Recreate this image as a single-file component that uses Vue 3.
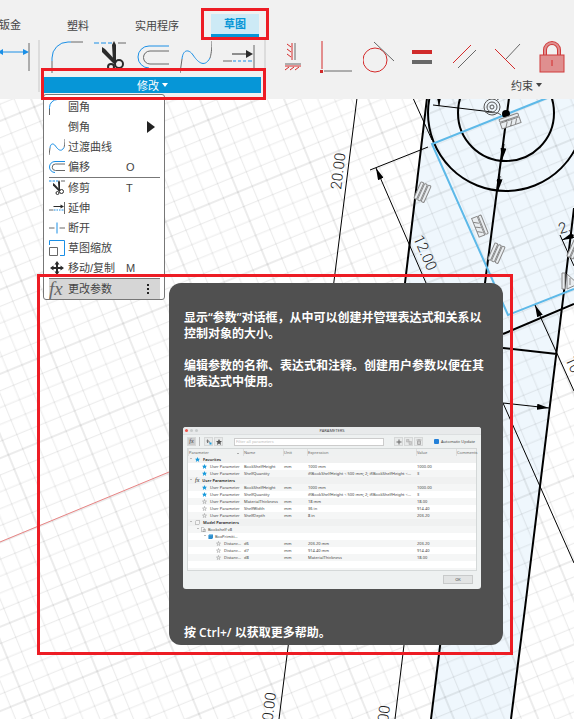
<script setup>
const tabs = [
  { id: 'sheet', label: '钣金' },
  { id: 'plastic', label: '塑料' },
  { id: 'utility', label: '实用程序' },
  { id: 'sketch', label: '草图', active: true },
]
const modifyTools = [
  { icon: 'fillet', label: '圆角' },
  { icon: 'trim', label: '修剪' },
  { icon: 'offset', label: '偏移' },
  { icon: 'spline', label: '过渡曲线' },
  { icon: 'extend', label: '延伸' },
]
const constraintTools = [
  { icon: 'horizontal', label: '水平/竖直' },
  { icon: 'coincident', label: '重合' },
  { icon: 'tangent', label: '相切' },
  { icon: 'equal', label: '相等' },
  { icon: 'parallel', label: '平行' },
  { icon: 'perpendicular', label: '垂直' },
  { icon: 'lock', label: '固定' },
]
const menuGroups = [
  [
    { icon: 'fillet', label: '圆角' },
    { label: '倒角', submenu: true },
    { icon: 'spline', label: '过渡曲线' },
    { icon: 'offset', label: '偏移', key: 'O' },
  ],
  [
    { icon: 'trim', label: '修剪', key: 'T' },
    { icon: 'extend', label: '延伸' },
    { icon: 'break', label: '断开' },
    { icon: 'scale', label: '草图缩放' },
    { icon: 'move', label: '移动/复制', key: 'M' },
  ],
  [{ fx: true, label: '更改参数', active: true }],
]
const dimensionLines = [
  'M426 283L376 168',
  'M574 391L535 305',
  'M503 403L549 408',
  'M439 96V106',
  'M574 235L562 240',
  'M504 144L502 160',
  'M500 176L498 191',
]
const longExpr = 'if(BookShelfHeight < 500 mm; 2; if(BookShelfHeight <...'
const rows = [
  { group: true, icon: 'star', label: 'Favorites' },
  { icon: 'star', label: 'User Parameter', name: 'BookShelfHeight', unit: 'mm', expr: '1000 mm', value: '1000.00' },
  { icon: 'star', label: 'User Parameter', name: 'ShelfQuantity', unit: '', expr: longExpr, value: '3' },
  { group: true, icon: 'fx', label: 'User Parameters' },
  { icon: 'star', label: 'User Parameter', name: 'BookShelfHeight', unit: 'mm', expr: '1000 mm', value: '1000.00' },
  { icon: 'star', label: 'User Parameter', name: 'ShelfQuantity', unit: '', expr: longExpr, value: '3' },
  { icon: 'starline', label: 'User Parameter', name: 'MaterialThickness', unit: 'mm', expr: '18 mm', value: '18.00' },
  { icon: 'starline', label: 'User Parameter', name: 'ShelfWidth', unit: 'mm', expr: '36 in', value: '914.40' },
  { icon: 'starline', label: 'User Parameter', name: 'ShelfDepth', unit: 'mm', expr: '8 in', value: '203.20' },
  { group: true, icon: 'cube', label: 'Model Parameters' },
  { open: true, level: 1, icon: 'page', label: 'Bookshelf v8' },
  { open: true, level: 2, icon: 'box', label: 'BoxPrimiti...' },
  { level: 3, icon: 'starline', label: 'Distanc...', name: 'd6', unit: 'mm', expr: '203.20 mm', value: '203.20' },
  { level: 3, icon: 'starline', label: 'Distanc...', name: 'd7', unit: 'mm', expr: '914.40 mm', value: '914.40' },
  { level: 3, icon: 'starline', label: 'Distanc...', name: 'd8', unit: 'mm', expr: 'MaterialThickness', value: '18.00' },
]
</script>

<template>
  <div class="app">
    <svg class="symbols" aria-hidden="true">
      <symbol id="fillet" viewBox="0 0 32 32">
        <path class="blue" d="M1 20V17A16 16 0 0 1 17 1H20" />
        <path class="gray" d="M20 1H32M1 20V32" />
      </symbol>
      <symbol id="trim" viewBox="0 0 32 32">
        <path class="blue" d="M0 2H5M7 2H12M14 2H18" />
        <path class="gray" d="M24 2H32" />
        <path class="dark" d="M18 4L20 0L22 4V20L19 20Z" />
        <path class="dark" d="M8 6L11 8L23 21L20 23L8 11Z" />
        <circle class="ring" cx="17" cy="26" r="3" />
        <circle class="ring" cx="25" cy="23" r="4" />
      </symbol>
      <symbol id="offset" viewBox="0 0 32 32">
        <path class="blue" d="M32 5H12A11 11 0 0 0 12 27" />
        <path class="gray" d="M32 10H13A6 6 0 0 0 13 23H32" />
      </symbol>
      <symbol id="spline" viewBox="0 0 32 32">
        <path class="gray" d="M0 32L2 18M32 0C32 8 31 14 30 17" />
        <path class="blue" d="M2 18C3 8 9 8 13 14S24 28 30 17" />
      </symbol>
      <symbol id="extend" viewBox="0 0 32 32">
        <path class="gray" d="M0 20H9M31 4V28" />
        <path class="blue" d="M10 20H13M15 20H18M20 20H23M25 20H29" />
        <path class="ink" d="M9 13H25" />
        <path class="dark" d="M23 9L30 13L23 17Z" />
      </symbol>
      <symbol id="break" viewBox="0 0 32 32">
        <path class="gray" d="M0 16H11M21 16H32" />
        <path class="blue" d="M16 5V27" />
      </symbol>
      <symbol id="scale" viewBox="0 0 32 32">
        <path class="blue" d="M1 10V1H31V31H22" />
        <path class="gray" d="M1 15H17V31H1Z" />
      </symbol>
      <symbol id="move" viewBox="0 0 32 32">
        <path class="heavy" d="M16 6V26M6 16H26" />
        <path class="dark" d="M16 2L21 9H11ZM16 30L21 23H11ZM2 16L9 11V21ZM30 16L23 11V21Z" />
      </symbol>
      <symbol id="dimension" viewBox="0 0 32 32">
        <path class="gray" d="M31 2V30" />
        <path class="blue" d="M0 11H29" />
        <path class="bluefill" d="M25 8L31 11L25 14ZM5 8L0 11L5 14Z" />
      </symbol>
      <symbol id="horizontal" viewBox="0 0 32 32">
        <path class="gray" d="M18 2V19M8 23H24" />
        <path class="red" d="M15 2V19M10 3L14 6M10 8L14 11M10 13L14 16M8 25H24M8 29L12 26M13 29L17 26M18 29L22 26" />
      </symbol>
      <symbol id="coincident" viewBox="0 0 32 32">
        <path class="red" d="M2 0V28" />
        <path class="gray" d="M4 30H32" />
        <rect class="redfill" x="0" y="29" width="3" height="3" />
      </symbol>
      <symbol id="tangent" viewBox="0 0 32 32">
        <circle class="red" cx="12" cy="19" r="12" />
        <path class="gray" d="M11 1L31 20" />
      </symbol>
      <symbol id="equal" viewBox="0 0 32 32">
        <rect class="redfill" x="6" y="9" width="20" height="4" />
        <rect class="grayfill" x="6" y="19" width="20" height="4" />
      </symbol>
      <symbol id="parallel" viewBox="0 0 32 32">
        <path class="gray" d="M9 27L27 9" />
        <path class="red" d="M4 22L22 4" />
      </symbol>
      <symbol id="perpendicular" viewBox="0 0 32 32">
        <path class="red" d="M3 8L23 28" />
        <path class="gray" d="M14 18L28 3" />
      </symbol>
      <symbol id="lock" viewBox="0 0 32 32">
        <path class="shackleout" d="M10 14V9A6 6 0 0 1 24 9V14" />
        <path class="shackle" d="M10 14V9A6 6 0 0 1 24 9V14" />
        <rect class="lockbody" x="5" y="14" width="24" height="17" />
        <path class="red" d="M17 19V25" />
      </symbol>
      <symbol id="star" viewBox="0 0 12 12">
        <path fill="#199bdc" d="M6 0L8 4L12 4L9 7L10 12L6 9L2 12L3 7L0 4L4 4Z" />
      </symbol>
      <symbol id="starline" viewBox="0 0 12 12">
        <path fill="none" stroke="#888" d="M6 1L7 5L11 5L8 7L9 11L6 9L3 11L4 7L1 5L5 5Z" />
      </symbol>
      <symbol id="darkstar" viewBox="0 0 12 12">
        <path fill="#555" d="M6 0L8 4L12 4L9 7L10 12L6 9L2 12L3 7L0 4L4 4Z" />
      </symbol>
      <symbol id="cube" viewBox="0 0 12 12">
        <path fill="#f4f4f4" stroke="#777" d="M1 3L3 1H11V9L9 11H1Z" />
      </symbol>
      <symbol id="page" viewBox="0 0 12 12">
        <path fill="#fff" stroke="#777" d="M1 1H6L8 4V11H1ZM5 6H11V11H5Z" />
      </symbol>
      <symbol id="box" viewBox="0 0 12 12">
        <path fill="#2f8fcd" d="M1 3L3 1H12V9L10 12H1Z" />
        <path fill="#7fc1ec" d="M1 3L3 1H12L10 3Z" />
      </symbol>
    </svg>

    <svg class="canvas" aria-label="草图画布">
      <defs>
        <pattern id="grid" width="78" height="78" patternUnits="userSpaceOnUse" patternTransform="translate(38 527) rotate(-22.3)">
          <path d="M15.6 0V78M31.2 0V78M46.8 0V78M62.4 0V78M0 15.6H78M0 31.2H78M0 46.8H78M0 62.4H78" fill="none" stroke="#000" stroke-opacity="0.08" />
          <path d="M0 0V78M78 0V78M0 0H78M0 78H78" fill="none" stroke="#000" stroke-opacity="0.15" />
        </pattern>
        <marker id="arrow" viewBox="0 0 12 6" refX="12" refY="3" markerWidth="12" markerHeight="6" markerUnits="userSpaceOnUse" orient="auto">
          <path d="M0 0L12 3L0 6Z" />
        </marker>
        <g id="bars" class="glyph">
          <rect x="-9" y="-5" width="18" height="3" rx="1" />
          <rect x="-9" y="-1" width="18" height="3" rx="1" />
          <rect x="-9" y="3" width="18" height="3" rx="1" />
        </g>
        <g id="hatch" class="glyph">
          <rect x="-10" y="-5" width="20" height="3" rx="1" />
          <path d="M-10 -1H10V5H-10ZM-6 5L-3 0M-1 5L2 0M4 5L7 0" />
        </g>
      </defs>
      <path class="profile" d="M427 98H574V304L562 309L511 719H431L438 645H404V283Z" />
      <rect width="100%" height="100%" fill="url(#grid)" />
      <path d="M0 542L169 472" stroke="#e88484" stroke-width="1" fill="none" />
      <g class="thin">
        <path d="M357 98L279 719M404 645L395 719M413 98L432 140M370 170L428 147" />
        <path d="M433 105L492 112M503 403L574 563M560 235L574 266" />
      </g>
      <g class="thick">
        <circle cx="506" cy="113" r="48" />
        <circle cx="506" cy="113" r="78" />
        <path d="M427 98L405 283M509 98L485 283L431 719M574 208L565 283L526 600L511 719M503 334L574 304M503 348L557 354" />
      </g>
      <path class="edge" d="M547 98L432 144L508 315L574 289" />
      <g class="thin">
        <path v-for="d in dimensionLines" :key="d" :d="d" marker-end="url(#arrow)" />
      </g>
      <circle cx="506" cy="114" r="4" />
      <use href="#bars" transform="translate(422 192) rotate(-66)" />
      <use href="#hatch" transform="translate(510 121) rotate(-19)" />
      <use href="#hatch" transform="translate(480 226) rotate(68)" />
      <use href="#bars" transform="translate(496 253) rotate(-66)" />
      <use href="#bars" transform="translate(575 250) rotate(-66)" />
      <path class="glyph" d="M562 273H565V289H562ZM567 274V289L578 284ZM570 278V285" />
      <g class="glyph strong">
        <circle cx="492" cy="107" r="8" />
        <circle cx="492" cy="107" r="5" />
        <circle cx="492" cy="107" r="2" />
        <path d="M485 112L498 113M497 100L500 98M498 113L501 115" />
      </g>
      <g class="dims">
        <text transform="translate(341 190) rotate(-83)">20.00</text>
        <text transform="translate(413 238) rotate(66)">12.00</text>
        <text transform="translate(560 234) rotate(-15)">2.</text>
        <text transform="translate(565 359) rotate(66)">10</text>
        <text text-anchor="end" transform="translate(276 693) rotate(-83)">0.00</text>
        <text text-anchor="end" transform="translate(390 706) rotate(-83)">00</text>
      </g>
    </svg>

    <header class="ribbon">
      <nav class="tabs">
        <button v-for="t in tabs" :key="t.id" type="button" class="tab" :class="[t.id, { active: t.active }]">{{ t.label }}</button>
      </nav>
      <div class="groups">
        <div class="group lead">
          <button type="button" class="tool" aria-label="尺寸"><svg class="icon"><use href="#dimension" /></svg></button>
        </div>
        <div class="group modify">
          <div class="tools">
            <button v-for="t in modifyTools" :key="t.icon" type="button" class="tool" :aria-label="t.label">
              <svg class="icon"><use :href="'#' + t.icon" /></svg>
            </button>
          </div>
          <button type="button" class="caption selected">修改<i class="caret"></i></button>
        </div>
        <div class="group constraints">
          <div class="tools">
            <button v-for="t in constraintTools" :key="t.icon" type="button" class="tool" :aria-label="t.label">
              <svg class="icon"><use :href="'#' + t.icon" /></svg>
            </button>
          </div>
          <button type="button" class="caption">约束<i class="caret"></i></button>
        </div>
      </div>
    </header>

    <div class="menu">
      <ul v-for="(g, i) in menuGroups" :key="i">
        <li v-for="m in g" :key="m.label">
          <button type="button" class="item" :class="{ active: m.active }">
            <span v-if="m.fx" class="fx">fx</span>
            <svg v-else class="micon"><use v-if="m.icon" :href="'#' + m.icon" /></svg>
            <span class="name">{{ m.label }}</span>
            <span v-if="m.key" class="key">{{ m.key }}</span>
            <i v-if="m.submenu" class="sub"></i>
            <span v-if="m.active" class="dots"><i></i><i></i><i></i></span>
          </button>
        </li>
      </ul>
    </div>

    <aside class="tip">
      <p>显示“参数”对话框，从中可以创建并管理表达式和关系以<br />控制对象的大小。</p>
      <p>编辑参数的名称、表达式和注释。创建用户参数以便在其<br />他表达式中使用。</p>
      <section class="dialog">
        <div class="titlebar">
          <span class="lights"><i></i><i></i><i></i></span>PARAMETERS
        </div>
        <div class="bar">
          <button type="button" class="sq on"><em>fx</em></button>
          <span class="vr"></span>
          <button type="button" class="sq" aria-label="Units"><svg viewBox="0 0 12 12"><path d="M3 1V8M1 4H6M5 6H8" stroke="#777" stroke-width="2" fill="none" /><rect x="7" y="7" width="4" height="4" fill="#199bdc" /></svg></button>
          <button type="button" class="sq" aria-label="Favorites"><svg><use href="#darkstar" /></svg></button>
          <input class="filter" type="text" placeholder="Filter all parameters" aria-label="Filter all parameters" />
          <button type="button" class="sq add" aria-label="Add"><svg viewBox="0 0 12 12"><path d="M6 1V11M1 6H11" stroke="#666" stroke-width="2" /></svg></button>
          <button type="button" class="sq" aria-label="Copy"><svg viewBox="0 0 12 12"><path d="M1 1H6V6H1ZM6 5H11V11H6Z" fill="#ccc" stroke="#aaa" /></svg></button>
          <button type="button" class="sq" aria-label="Delete"><svg viewBox="0 0 12 12"><path d="M1 2H11M3 4H9V11H3ZM5 1H7" fill="#ccc" stroke="#aaa" stroke-width="2" /></svg></button>
          <label class="auto"><input type="checkbox" checked />Automatic Update</label>
        </div>
        <div class="sheetbox">
          <table>
            <colgroup><col class="c1" /><col class="c2" /><col class="c3" /><col class="c4" /><col class="c5" /><col class="c6" /></colgroup>
            <thead>
              <tr><th>Parameter<i class="sort"></i></th><th>Name</th><th>Unit</th><th>Expression</th><th>Value</th><th>Comments</th></tr>
            </thead>
            <tbody>
              <tr v-for="(r, i) in rows" :key="i" :class="{ grouprow: r.group }">
                <td>
                  <span class="tree" :class="['l' + (r.level || 0), { leaf: !r.group && !r.open }]">
                    <i v-if="r.group || r.open" class="chev"></i>
                    <em v-if="r.icon === 'fx'">fx</em>
                    <svg v-else class="ticon"><use :href="'#' + r.icon" /></svg>
                    {{ r.label }}
                  </span>
                </td>
                <td>{{ r.name }}</td><td>{{ r.unit }}</td><td>{{ r.expr }}</td><td>{{ r.value }}</td><td></td>
              </tr>
            </tbody>
          </table>
        </div>
        <div class="foot"><button type="button" class="ok">OK</button></div>
      </section>
      <p class="help">按 Ctrl+/ 以获取更多帮助。</p>
    </aside>

    <div class="mark mark-tab"></div>
    <div class="mark mark-modify"></div>
    <div class="mark mark-tip"></div>
  </div>
</template>

<style>
body {
  background: #fff;
}
</style>

<style scoped>
.app {
  position: relative;
  min-height: 100vh;
  overflow: hidden;
  font-family: "Liberation Sans", "Noto Sans CJK SC", sans-serif;
  font-size: 11px;
  color: #444;
}
button {
  border: 0;
  margin: 0;
  padding: 0;
  background: none;
  font: inherit;
  color: inherit;
  white-space: nowrap;
}
p, ul { margin: 0; padding: 0; list-style: none; }
.symbols { position: absolute; width: 0; height: 0; }
.blue, .gray, .red, .ink, .heavy {
  fill: none;
  vector-effect: non-scaling-stroke;
}
.blue { stroke: #1a8fe6; }
.gray { stroke: #686868; }
.red { stroke: #d42a2a; }
.ink { stroke: #2b2b2b; }
.heavy { stroke: #2b2b2b; stroke-width: 2; }
.ring { fill: none; stroke: #2b2b2b; stroke-width: 2; }
.dark { fill: #2b2b2b; }
.bluefill { fill: #1a8fe6; }
.redfill { fill: #d02a2a; }
.grayfill { fill: #686868; }
.lockbody { fill: #df8f8f; stroke: #d03a3a; }
.shackleout { fill: none; stroke: #d03a3a; stroke-width: 4; }
.shackle { fill: none; stroke: #df8f8f; stroke-width: 2; }

.canvas { position: absolute; inset: 0; width: 100%; height: 100%; }
.profile { fill: #eff7fd; }
.thin { fill: none; stroke: #000; }
.thick { fill: none; stroke: #000; stroke-width: 2; }
.edge { fill: none; stroke: #5db9e8; stroke-width: 2; }
.glyph { fill: #e9edf0; stroke: #888; }
.strong { stroke: #555; fill: none; }
.dims { font-family: Roboto, sans-serif; font-weight: 300; font-size: 15px; fill: #222; }

.ribbon {
  position: relative;
  background: #f1f1f1;
  height: 99px;
  overflow: hidden;
}
.tabs { display: flex; padding-top: 14px; line-height: 22px; }
.tab { height: 23px; flex: none; }
.sheet { width: 21px; display: flex; justify-content: flex-end; }
.plastic { margin-left: 46px; }
.utility { margin-left: 46px; }
.tab.sketch {
  width: 48px;
  margin-left: 32px;
  background: #cdeaf6;
  border-bottom: 3px solid #0696d7;
  line-height: 20px;
  color: #0696d7;
  font-weight: 700;
}
.groups { display: flex; padding-top: 3px; }
.group { flex: none; height: 52px; }
.lead { width: 38px; border-right: 2px solid #dcdcdc; }
.lead .tool { margin-left: -2px; width: 32px; }
.modify { width: 217px; padding: 0 3px 0 4px; border-right: 2px solid #dcdcdc; }
.constraints { padding-left: 5px; }
.tools { display: flex; padding-left: 1px; }
.constraints .tools { padding: 0; }
.tool { display: flex; justify-content: center; width: 43px; padding-top: 1px; }
.icon { width: 32px; height: 32px; display: block; overflow: visible; }
.caption {
  display: flex;
  align-items: center;
  justify-content: center;
  gap: 3px;
  width: 100%;
  height: 16px;
  margin-top: 4px;
}
.caption.selected { background: #0696d7; color: #fff; }
.constraints .caption { width: auto; margin-left: 240px; }
.caret { border: 3px solid transparent; border-top: 4px solid currentColor; border-bottom: 0; }

.menu {
  position: absolute;
  left: 43px;
  top: 94px;
  width: 111px;
  padding: 2px 4px 0 5px;
  background: #fff;
  border: 1px solid #777;
  border-radius: 3px;
}
.menu ul + ul { border-top: 1px solid #777; }
.item {
  display: flex;
  align-items: center;
  width: 100%;
  height: 20px;
  line-height: 20px;
  text-align: left;
}
.item.active { background: #d6d6d6; }
.micon { width: 16px; height: 16px; margin-right: 3px; flex: none; overflow: visible; }
.fx {
  width: 19px;
  font-family: "Liberation Serif", serif;
  font-style: italic;
  font-size: 19px;
  color: #666;
}
.name { width: 58px; }
.sub { margin-left: 21px; border: 6px solid transparent; border-left: 8px solid #222; border-right: 0; }
.dots { margin-left: 21px; display: grid; gap: 2px; }
.dots i { width: 2px; height: 2px; background: #222; }

.tip {
  position: absolute;
  left: 169px;
  top: 283px;
  width: 334px;
  box-sizing: border-box;
  padding: 27px 15px 4px;
  border-radius: 12px;
  background: #505050;
  color: #fff;
  font-family: "Open Sans", "Noto Sans CJK SC", sans-serif;
  font-size: 12px;
  font-weight: 600;
  line-height: 16px;
  white-space: nowrap;
}
.tip p + p { margin-top: 16px; }

.dialog {
  width: 298px;
  margin: 37px 0 36px -1px;
  border-radius: 3px;
  background: #eef1f1;
  overflow: hidden;
  color: #444;
  font-family: "Noto Sans", sans-serif;
  font-size: 4px;
  font-weight: 400;
  line-height: 7px;
}
.titlebar { position: relative; text-align: center; background: #e8eaeb; border-bottom: 1px solid #dcdfe0; }
.lights { position: absolute; left: 2px; top: 2px; display: flex; gap: 2px; }
.lights i { width: 3px; height: 3px; border-radius: 50%; background: #c8cccc; }
.lights i:first-child { background: #f0564d; }
.bar { display: flex; align-items: center; height: 9px; padding: 2px 4px; }
.sq {
  width: 9px;
  height: 9px;
  box-sizing: border-box;
  flex: none;
  display: flex;
  align-items: center;
  justify-content: center;
  border: 1px solid #d6d8d8;
  background: #e8eaea;
  margin-right: 1px;
}
.sq svg { width: 6px; height: 6px; flex: none; }
.on { background: #ccc; }
em { font-family: "Liberation Serif", serif; font-style: italic; font-size: 6px; font-weight: 400; }
.vr { width: 1px; height: 9px; background: #bbb; margin: 0 4px 0 2px; }
.filter {
  flex: 1;
  min-width: 0;
  height: 8px;
  box-sizing: border-box;
  margin: 0 10px;
  padding: 0 1px;
  border: 1px solid #ccc;
  background: #fff;
  font: inherit;
}
.filter::placeholder { color: #bbb; }
.auto { display: flex; align-items: center; gap: 2px; margin-left: 10px; width: 43px; }
.auto input { appearance: none; width: 5px; height: 5px; margin: 0; border-radius: 1px; background: #2380d8; flex: none; }
.sheetbox {
  margin: 0 4px;
  height: 123px;
  border: 1px solid #d4d8d8;
  box-sizing: border-box;
  background: repeating-linear-gradient(#fff 0 7px, #f5f6f6 7px 14px);
}
table { width: 100%; table-layout: fixed; border-collapse: collapse; }
.c1 { width: 55px; }
.c2 { width: 40px; }
.c3 { width: 24px; }
.c4 { width: 109px; }
.c5 { width: 40px; }
th, td { height: 7px; padding: 0 0 0 1px; font-weight: 400; text-align: left; }
th { background: #eff1f1; color: #666; box-shadow: inset 1px 0 #ddd; }
tr.grouprow td { background: #f0f1f1; }
.grouprow { color: #222; }
.grouprow td { font-weight: 600; }
.sort { display: inline-block; margin-left: 28px; border: 1px solid transparent; border-top-color: #666; border-bottom: 0; }
.tree { display: flex; align-items: center; gap: 3px; height: 7px; }
.tree.leaf { padding-left: 13px; }
.tree.l1 { padding-left: 7px; gap: 2px; }
.tree.l2 { padding-left: 14px; gap: 2px; }
.tree.l3.leaf { padding-left: 27px; }
.ticon { width: 5px; height: 5px; flex: none; }
.chev { width: 2px; height: 2px; margin-left: 1px; border-top: 1px solid #bbb; flex: none; }
.foot { display: flex; justify-content: flex-end; padding: 4px 8px 5px; }
.ok { width: 30px; height: 9px; box-sizing: border-box; border: 1px solid #c8caca; background: #e2e4e4; line-height: 6px; }

.mark { position: absolute; border: 3px solid #ed1c24; box-sizing: border-box; pointer-events: none; }
.mark-tab { left: 201px; top: 8px; width: 68px; height: 32px; }
.mark-modify { left: 41px; top: 68px; width: 225px; height: 32px; }
.mark-tip { left: 37px; top: 274px; width: 476px; height: 381px; }
</style>
